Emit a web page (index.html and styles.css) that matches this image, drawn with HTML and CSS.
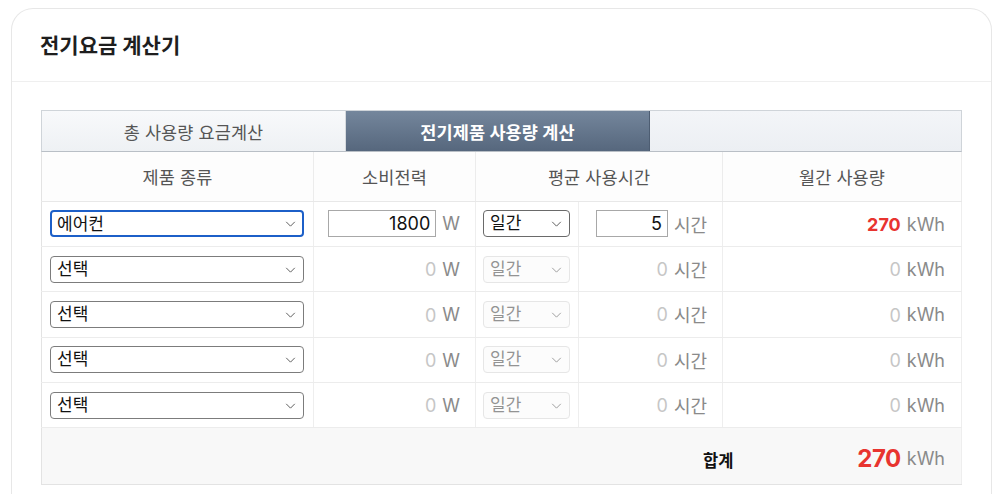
FILE: index.html
```html
<!DOCTYPE html>
<html lang="ko">
<head>
<meta charset="utf-8">
<title>전기요금 계산기</title>
<link rel="stylesheet" href="styles.css">
</head>
<body>
<div class="page">
  <section class="card">
    <header class="card-head">
      <h1 class="card-title">전기요금 계산기</h1>
    </header>
    <div class="card-body">
      <nav class="tabs">
        <button class="tab">총 사용량 요금계산</button>
        <button class="tab tab-active">전기제품 사용량 계산</button>
        <div class="tab-fill"></div>
      </nav>
      <table class="calc">
        <colgroup>
          <col class="c1"><col class="c2"><col class="c3"><col class="c4"><col class="c5">
        </colgroup>
        <thead>
          <tr>
            <th>제품 종류</th>
            <th>소비전력</th>
            <th colspan="2">평균 사용시간</th>
            <th>월간 사용량</th>
          </tr>
        </thead>
        <tbody>
          <tr>
            <td class="cell-product">
              <span class="sel sel-wide sel-focus"><select><option>에어컨</option></select><svg class="chev" viewBox="0 0 12 7"><path d="M1 1l5 5 5-5"/></svg></span>
            </td>
            <td class="cell-num"><input class="num num-w" value="1800"><span class="unit">W</span></td>
            <td class="cell-period">
              <span class="sel sel-small"><select><option>일간</option></select><svg class="chev" viewBox="0 0 12 7"><path d="M1 1l5 5 5-5"/></svg></span>
            </td>
            <td class="cell-num"><input class="num num-h" value="5"><span class="unit">시간</span></td>
            <td class="cell-num cell-result"><span class="val-red">270</span><span class="unit">kWh</span></td>
          </tr>
          <tr>
            <td class="cell-product">
              <span class="sel sel-wide"><select><option>선택</option></select><svg class="chev" viewBox="0 0 12 7"><path d="M1 1l5 5 5-5"/></svg></span>
            </td>
            <td class="cell-num"><span class="zero">0</span><span class="unit">W</span></td>
            <td class="cell-period">
              <span class="sel sel-small sel-off"><select disabled><option>일간</option></select><svg class="chev" viewBox="0 0 12 7"><path d="M1 1l5 5 5-5"/></svg></span>
            </td>
            <td class="cell-num"><span class="zero">0</span><span class="unit">시간</span></td>
            <td class="cell-num cell-result"><span class="zero">0</span><span class="unit">kWh</span></td>
          </tr>
          <tr>
            <td class="cell-product">
              <span class="sel sel-wide"><select><option>선택</option></select><svg class="chev" viewBox="0 0 12 7"><path d="M1 1l5 5 5-5"/></svg></span>
            </td>
            <td class="cell-num"><span class="zero">0</span><span class="unit">W</span></td>
            <td class="cell-period">
              <span class="sel sel-small sel-off"><select disabled><option>일간</option></select><svg class="chev" viewBox="0 0 12 7"><path d="M1 1l5 5 5-5"/></svg></span>
            </td>
            <td class="cell-num"><span class="zero">0</span><span class="unit">시간</span></td>
            <td class="cell-num cell-result"><span class="zero">0</span><span class="unit">kWh</span></td>
          </tr>
          <tr>
            <td class="cell-product">
              <span class="sel sel-wide"><select><option>선택</option></select><svg class="chev" viewBox="0 0 12 7"><path d="M1 1l5 5 5-5"/></svg></span>
            </td>
            <td class="cell-num"><span class="zero">0</span><span class="unit">W</span></td>
            <td class="cell-period">
              <span class="sel sel-small sel-off"><select disabled><option>일간</option></select><svg class="chev" viewBox="0 0 12 7"><path d="M1 1l5 5 5-5"/></svg></span>
            </td>
            <td class="cell-num"><span class="zero">0</span><span class="unit">시간</span></td>
            <td class="cell-num cell-result"><span class="zero">0</span><span class="unit">kWh</span></td>
          </tr>
          <tr>
            <td class="cell-product">
              <span class="sel sel-wide"><select><option>선택</option></select><svg class="chev" viewBox="0 0 12 7"><path d="M1 1l5 5 5-5"/></svg></span>
            </td>
            <td class="cell-num"><span class="zero">0</span><span class="unit">W</span></td>
            <td class="cell-period">
              <span class="sel sel-small sel-off"><select disabled><option>일간</option></select><svg class="chev" viewBox="0 0 12 7"><path d="M1 1l5 5 5-5"/></svg></span>
            </td>
            <td class="cell-num"><span class="zero">0</span><span class="unit">시간</span></td>
            <td class="cell-num cell-result"><span class="zero">0</span><span class="unit">kWh</span></td>
          </tr>
        </tbody>
        <tfoot>
          <tr>
            <td colspan="5" class="total-cell">
              <div class="total">
                <span class="total-label">합계</span>
                <span class="total-value"><span class="total-num">270</span><span class="unit">kWh</span></span>
              </div>
            </td>
          </tr>
        </tfoot>
      </table>
    </div>
  </section>
</div>
</body>
</html>
```

FILE: styles.css
```css
* { box-sizing: border-box; }

html, body {
  margin: 0;
  padding: 0;
  background: #ffffff;
}

body {
  font-family: Inter, "Noto Sans CJK KR", sans-serif;
  color: #222;
}

.page {
  padding: 8px 8px 0 11px;
}

.card {
  border: 1px solid #e7e7e7;
  border-bottom: none;
  border-radius: 22px 22px 0 0;
  height: 486px;
  overflow: hidden;
}

.card-head {
  height: 73px;
  border-bottom: 1px solid #efefef;
  display: flex;
  align-items: center;
  padding: 0 0 0 28px;
}

.card-title {
  margin: 0;
  font-size: 21px;
  font-weight: 700;
  line-height: 1;
  color: #1e1e1e;
  padding-top: 1px;
}

.card-body {
  padding: 28px 29px 0 29px;
}

/* Tabs */
.tabs {
  display: flex;
  height: 42px;
  border: 1px solid #cfd4d9;
  border-bottom: 1px solid #b9bfc6;
}

.tab {
  width: 304px;
  border: none;
  margin: 0;
  padding: 0;
  font-family: inherit;
  font-size: 17.5px;
  letter-spacing: 0.1px;
  color: #555;
  background: linear-gradient(#f8f9fb, #eef1f4);
  border-right: 1px solid #d6dade;
}

.tab-active {
  color: #fff;
  font-weight: 700;
  background: linear-gradient(#74869c, #56677d);
  border-right: 1px solid #4d5d72;
}

.tab-fill {
  flex: 1;
  background: linear-gradient(#f3f5f8, #eceff3);
}

/* Table */
.calc {
  width: 920px;
  border-collapse: collapse;
  table-layout: fixed;
  border-left: 1px solid #e3e3e3;
  border-right: 1px solid #e3e3e3;
}

.c1 { width: 272px; }
.c2 { width: 162px; }
.c3 { width: 103px; }
.c4 { width: 144px; }
.c5 { width: 239px; }

.calc th {
  height: 49px;
  font-weight: 400;
  font-size: 17.5px;
  letter-spacing: 0.1px;
  color: #555;
  background: #fdfdfd;
  border-right: 1px solid #ececec;
  border-bottom: 1px solid #e8e8e8;
  padding: 0;
}

.calc td {
  height: 45.4px;
  padding: 0;
  border-right: 1px solid #eeeeee;
  border-bottom: 1px solid #ececec;
  vertical-align: middle;
  font-size: 17px;
}

.cell-product { padding-left: 8px !important; }
.cell-period { padding-left: 7px !important; }

.cell-num {
  text-align: right;
  padding-right: 15px !important;
  white-space: nowrap;
}

.cell-result { padding-right: 16px !important; }

/* Selects */
.sel {
  position: relative;
  display: inline-block;
  vertical-align: middle;
}

.sel select {
  appearance: none;
  -webkit-appearance: none;
  display: block;
  height: 27px;
  border: 1px solid #7c7c7c;
  border-radius: 4px;
  background: #fff;
  font-family: inherit;
  font-size: 17px;
  color: #111;
  padding: 0 0 0 6px;
  line-height: 25px;
  margin: 0;
}

.sel-wide select { width: 254px; }
.sel-small select { width: 87px; }

.sel-focus select {
  border: 2px solid #1c5fc8;
  padding-left: 5px;
}

.sel-small select { border-color: #6a6a6a; }

.sel-off select {
  border-color: #dcdcdc;
  background: #fbfbfb;
  color: #666;
}

.chev {
  position: absolute;
  right: 8px;
  top: 11px;
  width: 11px;
  height: 6px;
  fill: none;
  stroke: #555;
  stroke-width: 1.1;
  pointer-events: none;
}

.sel-off .chev { stroke: #999; }

/* Inputs */
.num {
  height: 27px;
  border: 1px solid #a8a8a8;
  border-radius: 0;
  font-family: inherit;
  font-size: 18px;
  color: #111;
  text-align: right;
  padding: 0 5px 0 0;
  margin: 0;
  vertical-align: middle;
}

.num-w { width: 108px; }
.num-h { width: 72px; }

.unit {
  display: inline-block;
  margin-left: 6px;
  color: #8a8a8a;
  font-size: 18px;
  vertical-align: middle;
}

.zero {
  color: #c6c6c6;
  font-size: 18px;
  vertical-align: middle;
}

.val-red {
  color: #e8342f;
  font-weight: 700;
  font-size: 18px;
  vertical-align: middle;
}

/* Total */
.calc .total-cell {
  height: 57px;
  background: #f8f8f8;
  border-bottom: 1px solid #e3e3e3;
  padding: 4px 16px 0 0;
}

.total {
  display: flex;
  justify-content: flex-end;
  align-items: center;
  gap: 124px;
}

.total-label {
  font-weight: 700;
  font-size: 16.5px;
  color: #111;
  padding-top: 4px;
}

.total-value {
  display: flex;
  align-items: center;
}

.total-num {
  color: #e8342f;
  font-weight: 700;
  font-size: 24px;
  letter-spacing: -0.5px;
}
```
